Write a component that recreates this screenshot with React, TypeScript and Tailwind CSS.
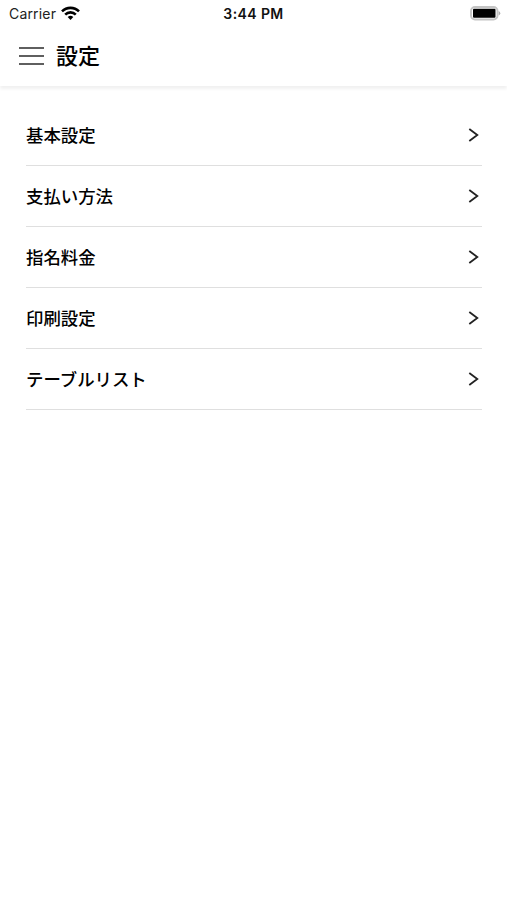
const items = ["基本設定", "支払い方法", "指名料金", "印刷設定", "テーブルリスト"];

export default function App() {
  return (
    <div className="min-h-[900px] bg-white font-['Inter','Noto_Sans_CJK_JP',sans-serif] text-black">
      <StatusBar />
      <header className="flex h-[59px] items-center gap-3 pb-px pl-[19px] shadow-[0_3px_3px_rgba(0,0,0,0.06)]">
        <button type="button" aria-label="メニュー">
          <MenuIcon />
        </button>
        <h1 className="text-[22px] leading-[30px] font-medium">設定</h1>
      </header>
      <ul className="pt-[19px] pr-[25px] pl-[26px]">
        {items.map((item) => (
          <li
            key={item}
            className="flex h-[61px] items-center justify-between border-b border-[#dfdfdf] pr-[3px]"
          >
            <span className="pt-0.5 text-[17.4px] font-medium">{item}</span>
            <ChevronIcon />
          </li>
        ))}
      </ul>
    </div>
  );
}

function StatusBar() {
  return (
    <div className="grid h-[27px] grid-cols-3 items-center pr-[6px] pl-[9px] text-[14px]">
      <div className="flex items-center gap-1.5">
        <span className="tracking-[0.17px] text-[#222]">Carrier</span>
        <WifiIcon />
      </div>
      <span className="-ml-[3px] text-center font-semibold tracking-[0.4px] text-[#111]">3:44 PM</span>
      <div className="flex justify-end">
        <BatteryIcon />
      </div>
    </div>
  );
}

function WifiIcon() {
  return (
    <svg className="-mt-0.5 -ml-px" width="19" height="14" viewBox="0 0 19 14" fill="none" stroke="#000" strokeWidth="2.6">
      <path d="M1 5.4a12 12 0 0 1 17 0" />
      <path d="M4.2 8.6a7.5 7.5 0 0 1 10.6 0" />
      <path d="M6.7 11a4 4 0 0 1 5.6 0L9.5 13.9z" fill="#000" stroke="none" />
    </svg>
  );
}

function BatteryIcon() {
  return (
    <svg width="31" height="15" viewBox="0 0 31 15">
      <rect x="1" y="1" width="26.5" height="12.5" rx="4" fill="none" stroke="#c4c4c4" strokeWidth="1.9" />
      <rect x="3" y="2.8" width="22.5" height="9" rx="1" />
      <path d="M28.7 5v4.5q1.6-.8 1.6-2.2T28.7 5z" fill="#adadad" />
    </svg>
  );
}

function MenuIcon() {
  return (
    <svg className="block" width="25" height="18" viewBox="0 0 25 18" stroke="#5f5f5f" strokeWidth="2">
      <path d="M0 1h25M0 9h25M0 17h25" />
    </svg>
  );
}

function ChevronIcon() {
  return (
    <svg className="-mt-px" width="11" height="14" viewBox="0 0 11 14" fill="none" stroke="#222" strokeWidth="1.8">
      <path d="M1.3 1l8 6-8 6" />
    </svg>
  );
}
